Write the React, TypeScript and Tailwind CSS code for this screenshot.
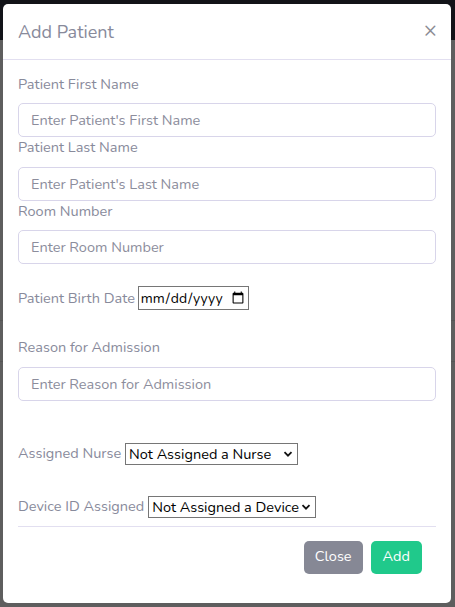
import React from 'react'

const font = "font-['Nunito','Lato',sans-serif]"

function TextField({ label, placeholder }: { label: string; placeholder: string }) {
  return (
    <div>
      <label className="block text-[14.5px] leading-[21px] text-[#888a9b]">{label}</label>
      <input
        type="text"
        placeholder={placeholder}
        className="mt-[8.5px] block h-[34px] w-full rounded-[5px] border border-[#d8d5ea] bg-white px-[12px] text-[14.5px] text-[#5a5a6a] placeholder:text-[#8c8d9c] outline-none"
      />
    </div>
  )
}

function Chevron() {
  return (
    <svg className="pointer-events-none absolute right-[5px] top-1/2 h-[10px] w-[10px] -translate-y-1/2" viewBox="0 0 10 10">
      <path d="M1.5 3.2 5 6.7 8.5 3.2" fill="none" stroke="#111" strokeWidth={1.8} />
    </svg>
  )
}

export default function App() {
  return (
    <div className={`relative h-[607px] w-[455px] overflow-hidden ${font}`}>
      {/* page behind the backdrop */}
      <div className="flex h-full flex-col">
        <div className="h-[40px] bg-[#121318]" />
        <div className="flex-1 bg-[#5e5e5e]">
          <div className="mt-[280px] h-[1px] bg-[#555]" />
          <div className="mt-[40px] h-[1px] bg-[#555]" />
        </div>
      </div>

      {/* modal */}
      <div className="absolute left-[3px] top-[4px] w-[448px] rounded-[5px] bg-white">
        <div className="flex h-[56px] items-center justify-between border-b border-[#e2dff0] pl-[15px] pr-[14px] pt-[1px]">
          <h5 className="text-[18px] leading-none text-[#888a9b]">Add Patient</h5>
          <button className="-mt-[5px] text-[22px] leading-none text-[#8c8c94]">×</button>
        </div>

        <div className="px-[15px] pt-[13.5px]">
          <TextField label="Patient First Name" placeholder="Enter Patient's First Name" />
          <TextField label="Patient Last Name" placeholder="Enter Patient's Last Name" />
          <TextField label="Room Number" placeholder="Enter Room Number" />

          <div className="mt-[22px] flex items-center">
            <label className="text-[14.5px] leading-[21px] text-[#888a9b]">Patient Birth Date</label>
            <input
              type="date"
              className="ml-[3px] h-[24px] w-[111px] border border-[#767676] bg-white px-[1px] text-[14px] text-black"
            />
          </div>

          <div className="mt-[27px]">
            <TextField label="Reason for Admission" placeholder="Enter Reason for Admission" />
          </div>

          <div className="mt-[42px] flex items-center">
            <label className="text-[14.5px] leading-[21px] text-[#888a9b]">Assigned Nurse</label>
            <div className="relative ml-[4px]">
              <select className="block h-[22px] w-[173px] appearance-none border border-[#767676] bg-white pl-[3px] text-[14.5px] text-black outline-none">
                <option>Not Assigned a Nurse</option>
              </select>
              <Chevron />
            </div>
          </div>

          <div className="mt-[31px] flex items-center">
            <label className="text-[14.5px] leading-[21px] text-[#888a9b]">Device ID Assigned</label>
            <div className="relative ml-[4px]">
              <select className="block h-[22px] w-[168px] appearance-none border border-[#767676] bg-white pl-[3px] text-[14.5px] text-black outline-none">
                <option>Not Assigned a Device</option>
              </select>
              <Chevron />
            </div>
          </div>

          <div className="mt-[8px] flex justify-end gap-[8px] border-t border-[#e2dff0] pb-[29px] pr-[14px] pt-[14px]">
            <button className="h-[33px] rounded-[5px] bg-[#868895] px-[11px] text-[14.5px] text-white">Close</button>
            <button className="h-[33px] rounded-[5px] bg-[#20c98b] px-[12px] text-[14.5px] text-white">Add</button>
          </div>
        </div>
      </div>
    </div>
  )
}
